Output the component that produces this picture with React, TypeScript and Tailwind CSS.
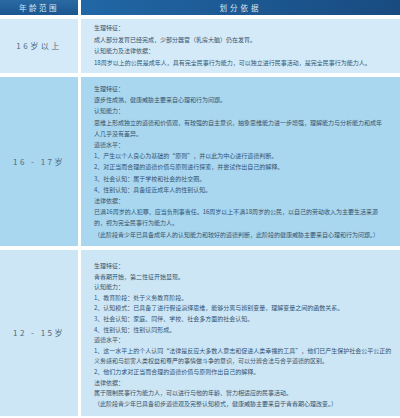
import React from "react";

const font = { fontFamily: '"Noto Sans CJK SC", "Noto Sans", sans-serif' };

type Row = {
  label: string;
  bg: string;
  h: string;
  pt: string;
  lh: string;
  lines: string[];
};

const rows: Row[] = [
  {
    label: "16岁以上",
    bg: "bg-[#d4eaf8]",
    h: "h-[54px]",
    pt: "pt-[3px]",
    lh: "leading-[11.7px]",
    lines: [
      "生理特征：",
      "成人部分发育已经完成，少部分器官（乳房大脑）仍在发育。",
      "认知能力及法律依据：",
      "18周岁以上的公民是成年人，具有完全民事行为能力，可以独立进行民事活动，是完全民事行为能力人。",
    ],
  },
  {
    label: "16 - 17岁",
    bg: "bg-[#a9d7ef]",
    h: "h-[169px]",
    pt: "pt-[6px]",
    lh: "leading-[11.2px]",
    lines: [
      "生理特征：",
      "逐步性成熟，健康威胁主要来自心理和行为问题。",
      "认知能力：",
      "思维上形成独立的道德和价值观，有较强的自主意识，抽象思维能力进一步增强，理解能力与分析能力和成年",
      "人几乎没有差异。",
      "道德水平：",
      "1、产生以个人良心为基础的“原则”，并以此为中心进行道德判断。",
      "2、对正当而合理的道德价值与原则进行探索，并尝试作出自己的解释。",
      "3、社会认知：属于学校和社会的社交圈。",
      "4、性别认知：具备接近成年人的性别认知。",
      "法律依据：",
      "已满16周岁的人犯罪，应当负刑事责任。16周岁以上不满18周岁的公民，以自己的劳动收入为主要生活来源",
      "的，视为完全民事行为能力人。",
      "（此阶段青少年已具备成年人的认知能力和较好的道德判断，此阶段的健康威胁主要来自心理和行为问题。）",
    ],
  },
  {
    label: "12 - 15岁",
    bg: "bg-[#cce6f5]",
    h: "h-[166px]",
    pt: "pt-[11px]",
    lh: "leading-[10.6px]",
    lines: [
      "生理特征：",
      "青春期开始，第二性征开始显现。",
      "认知能力：",
      "1、教育阶段：处于义务教育阶段。",
      "2、认知模式：已具备了进行假设演绎思维，能够分离与辨别变量，理解变量之间的函数关系。",
      "3、社会认知：家庭、同伴、学校、社会多方面的社会认知。",
      "4、性别认知：性别认同形成。",
      "道德水平：",
      "1、这一水平上的个人认同“法律是反应大多数人意志和促进人类幸福的工具”，他们已产生保护社会公平公正的",
      "义务感和与损害人类权益和尊严的事情做斗争的意识，可以分辨合法与合乎道德的区别。",
      "2、他们力求对正当而合理的道德价值与原则作出自己的解释。",
      "法律依据：",
      "属于限制民事行为能力人，可以进行与他的年龄、智力相适应的民事活动。",
      "（此阶段青少年已具备初步道德观及完整认知模式，健康威胁主要来自于青春期心理改变。）",
    ],
  },
];

export default function App() {
  return (
    <div className="w-[400px] h-[418px] bg-white overflow-hidden" style={font}>
      <div className="grid grid-cols-[78px_319px] gap-x-[3px] gap-y-[4px]">
        <div className="h-[15px] bg-gradient-to-b from-[#2a6aa3] to-[#1a5690] flex items-center justify-center text-[7.5px] tracking-[2.5px] text-[#d6e8f6]">
          年龄范围
        </div>
        <div className="h-[15px] bg-gradient-to-r from-[#2167a6] to-[#184b80] flex items-center justify-center text-[7.5px] tracking-[3px] text-[#d6e8f6]">
          划分依据
        </div>
        {rows.map((r) => (
          <React.Fragment key={r.label}>
            <div
              className={`${r.bg} ${r.h} flex items-center justify-center text-[8px] tracking-[2.5px] text-[#4d6a80]`}
            >
              {r.label}
            </div>
            <div className={`${r.bg} ${r.h} ${r.pt} pl-[13px] pr-[10px] text-[6px] ${r.lh} text-[#33536f] whitespace-nowrap overflow-hidden`}>
              {r.lines.map((l, i) => (
                <div key={i}>{l}</div>
              ))}
            </div>
          </React.Fragment>
        ))}
      </div>
    </div>
  );
}
